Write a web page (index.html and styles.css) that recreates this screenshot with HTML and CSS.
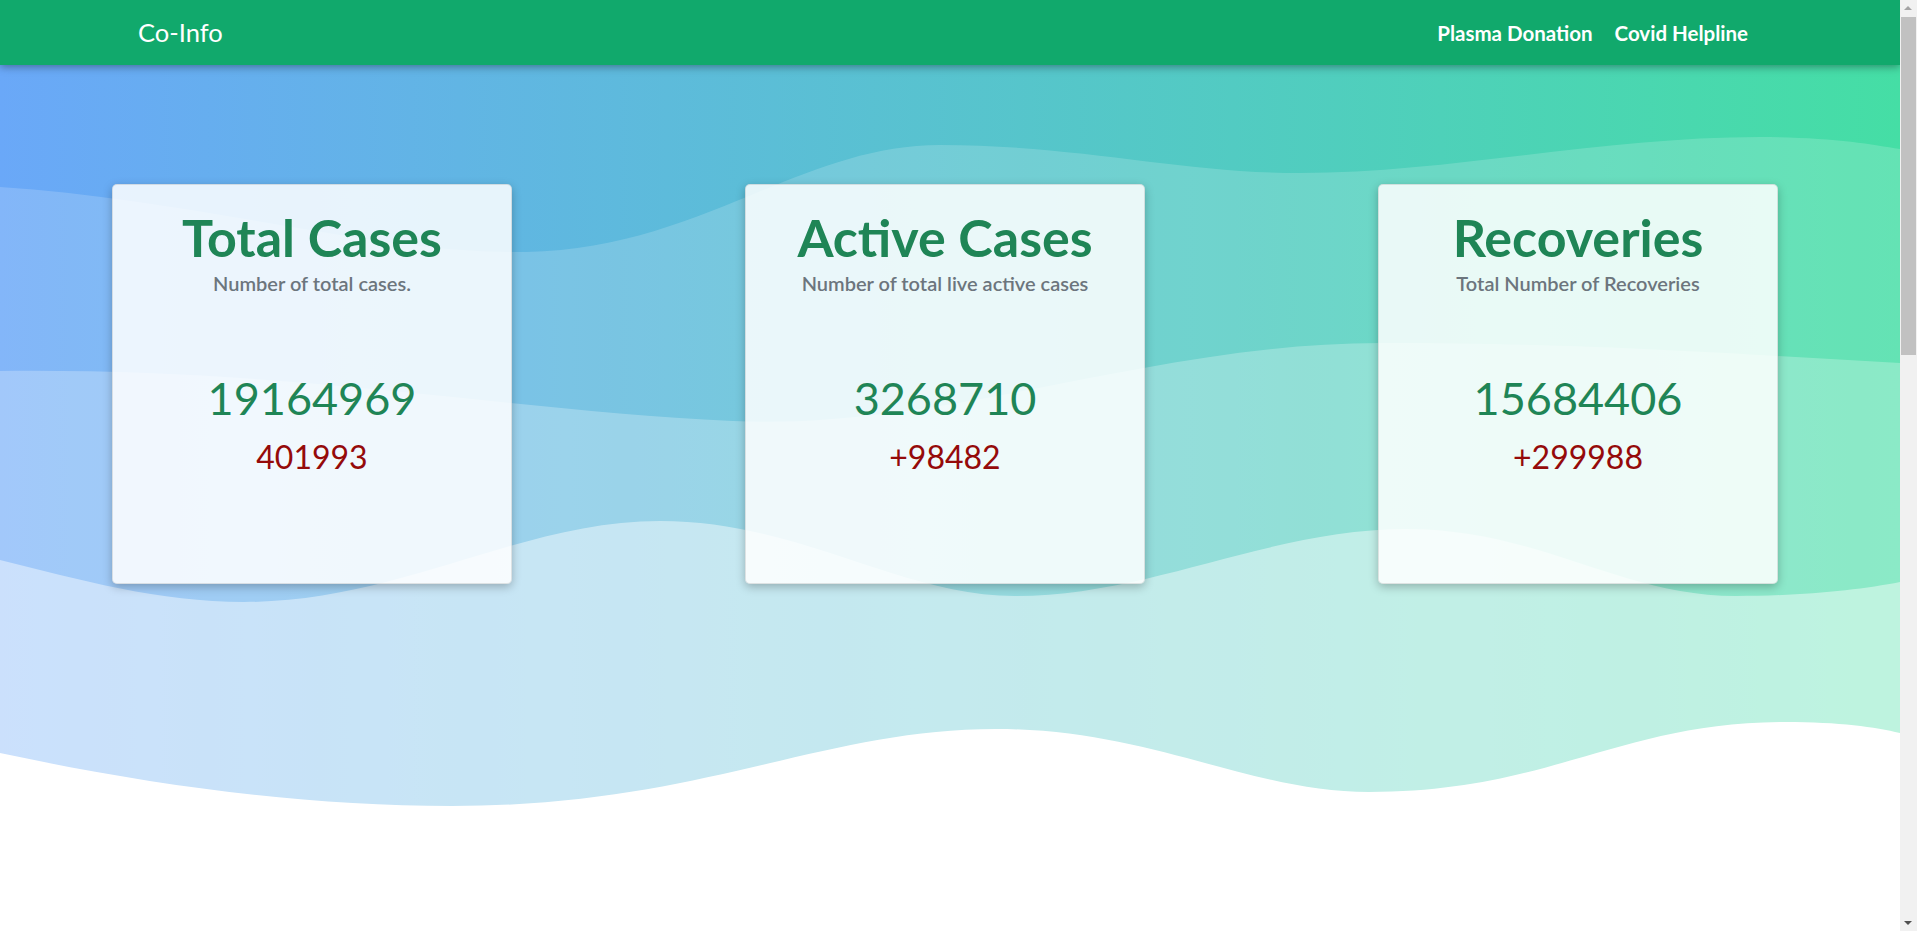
FILE: index.html
```html
<!DOCTYPE html>
<html lang="en">
<head>
<meta charset="utf-8">
<title>Co-Info</title>
<link rel="stylesheet" href="styles.css">
</head>
<body>
<div class="page">
  <header class="navbar">
    <a class="brand" href="#">Co-Info</a>
    <nav class="nav">
      <a class="nav-link" href="#">Plasma Donation</a>
      <a class="nav-link" href="#">Covid Helpline</a>
    </nav>
  </header>
  <section class="hero">
    <svg class="waves" viewBox="0 65 1900 775" preserveAspectRatio="none" aria-hidden="true">
      <defs>
        <linearGradient id="bg" x1="0" y1="0" x2="1" y2="0">
          <stop offset="0" stop-color="#6aa8f8"/>
          <stop offset="1" stop-color="#45dea5"/>
        </linearGradient>
      </defs>
      <rect x="0" y="0" width="1900" height="900" fill="url(#bg)"/>
      <path fill="#ffffff" fill-opacity="0.17" d="M0,187 C200,200 380,255 526,252 C700,249 800,145 940,145 C1080,145 1180,173 1300,173 C1450,173 1600,137 1760,137 C1830,137 1870,144 1900,149 L1900,900 L0,900 Z"/>
      <path fill="#ffffff" fill-opacity="0.25" d="M0,371 C300,368 500,410 733,421 C950,430 1150,343 1381,343 C1600,343 1750,355 1900,363 L1900,900 L0,900 Z"/>
      <path fill="#ffffff" fill-opacity="0.44" d="M0,560 C80,580 160,602 244,602 C400,602 520,521 660,521 C800,521 900,596 1015,596 C1150,596 1270,529 1406,529 C1540,529 1620,596 1736,596 C1800,596 1860,590 1900,582 L1900,900 L0,900 Z"/>
      <path fill="#ffffff" d="M0,753 C150,785 300,806 452,806 C700,806 820,729 996,729 C1150,729 1250,792 1369,792 C1550,792 1620,722 1785,722 C1840,722 1875,727 1900,733 L1900,900 L0,900 Z"/>
    </svg>
    <div class="cards">
      <div class="card">
        <h2 class="card-title">Total Cases</h2>
        <p class="card-sub">Number of total cases.</p>
        <p class="card-num">19164969</p>
        <p class="card-delta">401993</p>
      </div>
      <div class="card">
        <h2 class="card-title">Active Cases</h2>
        <p class="card-sub">Number of total live active cases</p>
        <p class="card-num">3268710</p>
        <p class="card-delta">+98482</p>
      </div>
      <div class="card">
        <h2 class="card-title">Recoveries</h2>
        <p class="card-sub">Total Number of Recoveries</p>
        <p class="card-num">15684406</p>
        <p class="card-delta">+299988</p>
      </div>
    </div>
  </section>
  <section class="below"></section>
</div>
<div class="scrollbar" aria-hidden="true">
  <span class="sb-arrow sb-up"></span>
  <span class="sb-thumb"></span>
  <span class="sb-arrow sb-down"></span>
</div>
</body>
</html>
```
FILE: styles.css
```css
* { box-sizing: border-box; }
html, body { margin: 0; padding: 0; }
body {
  font-family: Lato, "Open Sans", "Liberation Sans", sans-serif;
  background: #ffffff;
  color: #212529;
  height: 931px;
  overflow: hidden;
  padding-right: 17px;
}
.page {
  height: 931px;
  overflow: hidden;
}
.navbar {
  position: relative;
  z-index: 10;
  height: 65px;
  display: flex;
  align-items: center;
  justify-content: space-between;
  padding: 0 152px 0 138px;
  background: #11a96c;
  box-shadow: 0 2px 8px rgba(0, 0, 0, 0.35);
}
.brand {
  color: #ffffff;
  text-decoration: none;
  font-size: 25.5px;
  font-weight: 400;
  line-height: 1;
}
.nav {
  display: flex;
  gap: 22px;
}
.nav-link {
  color: #ffffff;
  text-decoration: none;
  font-size: 20.5px;
  font-weight: 700;
}
.hero {
  position: relative;
  height: 775px;
}
.waves {
  position: absolute;
  left: 0;
  top: 0;
  width: 100%;
  height: 100%;
  display: block;
}
.cards {
  position: relative;
  z-index: 1;
  display: flex;
  justify-content: space-between;
  padding: 119px 122px 0 112px;
}
.card {
  width: 400px;
  height: 400px;
  background: rgba(255, 255, 255, 0.85);
  border: 1px solid rgba(0, 0, 0, 0.1);
  border-radius: 5px;
  box-shadow: 0 3px 10px rgba(0, 0, 0, 0.25);
  padding-top: 21px;
  text-align: center;
}
.card p { margin: 0; }
.card-title {
  margin: 0;
  font-size: 52px;
  line-height: 1.2;
  font-weight: 700;
  color: #1f8556;
}
.card-sub {
  margin-top: 3px !important;
  font-size: 20px;
  line-height: 1.2;
  font-weight: 600;
  color: #6c757d;
}
.card-num {
  margin-top: 76px !important;
  font-size: 45px;
  line-height: 1.2;
  font-weight: 400;
  color: #1f8556;
}
.card-delta {
  margin-top: 13px !important;
  font-size: 32px;
  line-height: 1.2;
  font-weight: 400;
  color: #950a0a;
}
.below {
  height: 200px;
  background: #ffffff;
}
.scrollbar {
  position: fixed;
  top: 0;
  right: 0;
  width: 17px;
  height: 931px;
  background: #f1f1f1;
  display: flex;
  flex-direction: column;
  align-items: center;
}
.sb-arrow {
  display: block;
  width: 17px;
  height: 17px;
  position: relative;
}
.sb-arrow::after {
  content: "";
  position: absolute;
  left: 4px;
  width: 0;
  height: 0;
  border-left: 4px solid transparent;
  border-right: 4px solid transparent;
}
.sb-up::after {
  top: 6px;
  border-bottom: 4px solid #a3a3a3;
}
.sb-down {
  margin-top: auto;
}
.sb-down::after {
  top: 7px;
  border-top: 4px solid #505050;
}
.sb-thumb {
  display: block;
  width: 15px;
  height: 338px;
  background: #c1c1c1;
}
```
